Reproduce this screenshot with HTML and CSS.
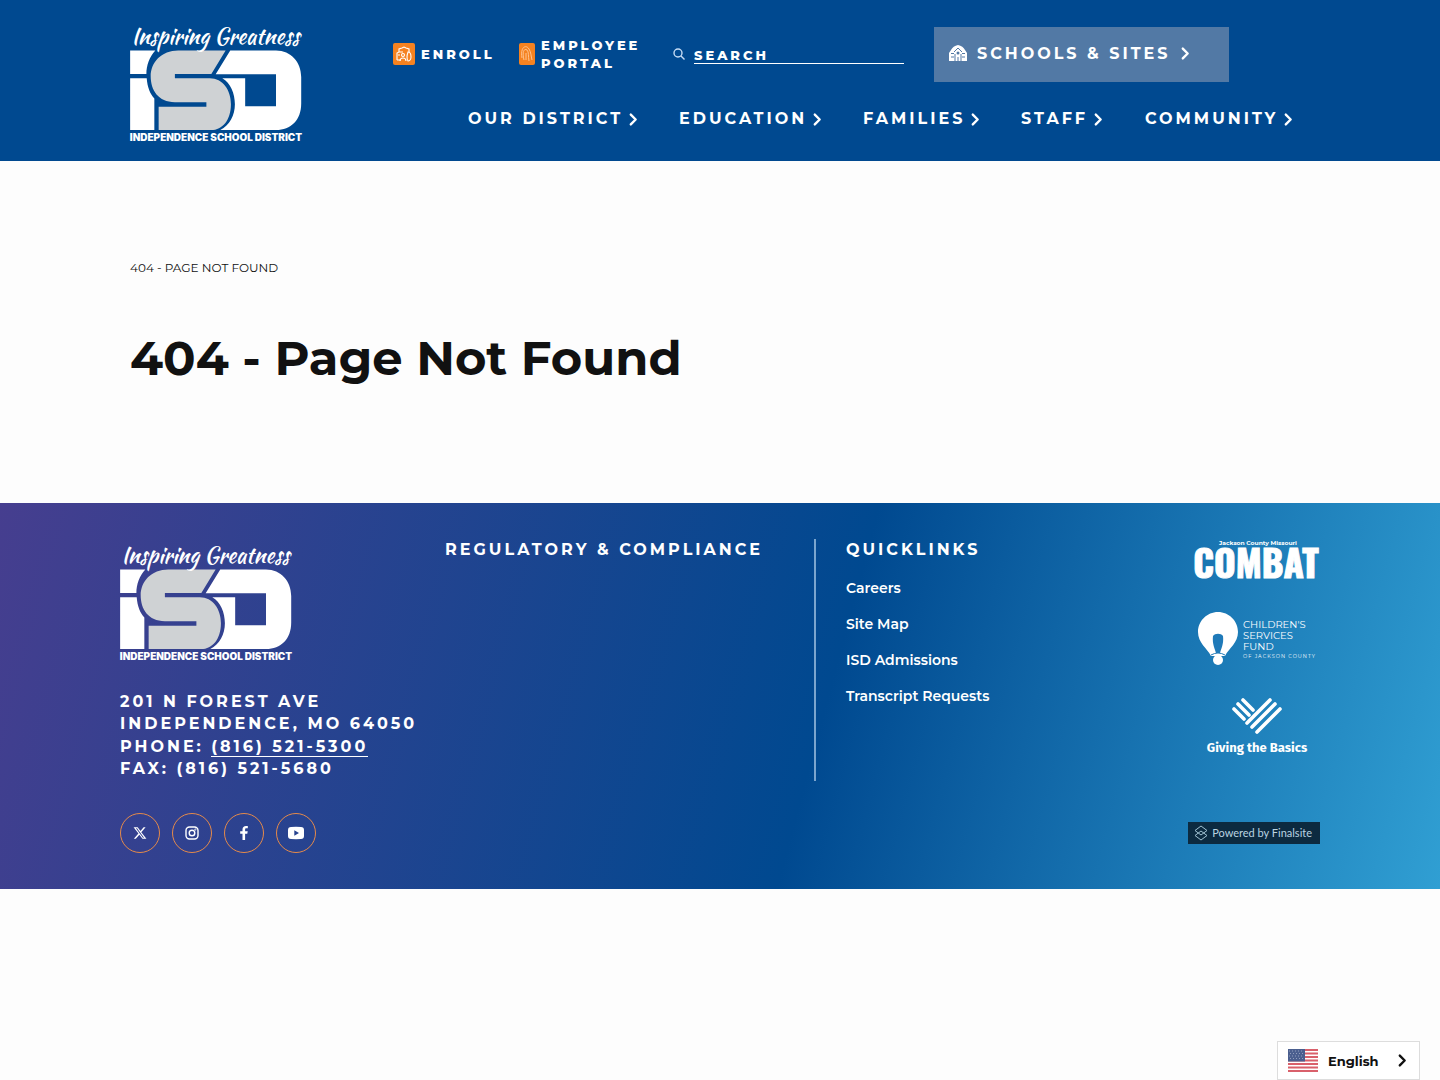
FILE: index.html
```html
<!DOCTYPE html>
<html lang="en">
<head>
  <meta charset="utf-8">
  <meta name="viewport" content="width=device-width, initial-scale=1.0">
  <title>404 - Page Not Found</title>
  <link rel="stylesheet" href="styles.css">
</head>
<body>

  <!-- Shared shapes -->
  <svg class="sprite" aria-hidden="true">
    <symbol id="logo" viewBox="30 28 518 368">
      <path fill="#fff" d="M30 120H106C88 140 79 165 79 191H30ZM30 204H80C82 232 91 252 103 265V360H30Z"/>
      <path fill="#cfd2d4" d="M175 120H318L275 191H165V204H270C310 204 334 240 334 282C334 330 308 360 275 360H116V290H260V276H165C115 276 92 240 92 198C92 155 125 120 175 120Z"/>
      <path fill="#fff" d="M332 120H470C515 120 546 155 546 200V280C546 330 515 360 470 360H302C330 345 346 315 346 282C346 250 333 218 308 204H377V288H470V192H288Z"/>
      <text class="logo-script" x="34" y="100">Inspiring Greatness</text>
      <text class="logo-name" x="29" y="393">INDEPENDENCE SCHOOL DISTRICT</text>
    </symbol>
    <symbol id="chevron" viewBox="0 0 8 12">
      <path d="M1.5 1.5L6 6L1.5 10.5" fill="none" stroke="currentColor" stroke-width="2.2" stroke-linecap="round" stroke-linejoin="round"/>
    </symbol>
  </svg>

  <header class="header">
    <a class="logo" href="#" aria-label="Independence School District"><svg><use href="#logo"/></svg></a>

    <div class="header-right">
      <div class="header-top">
        <a class="top-link enroll" href="#">
          <svg width="22" height="22" viewBox="0 0 22 22" fill="none" stroke="#fff" stroke-width="1.1">
            <rect width="22" height="22" rx="2" fill="#f58220" stroke="none"/>
            <path d="M4 17V10L6 9V6L9 5L11 4L13 5L16 6V9M6 9H10M4 17H8M5 12H7"/>
            <circle cx="10" cy="12" r="1.5"/><path d="M7 18C7 14 13 14 13 18M15 9C18 9 18 12 18 14C18 17 16 18 15 18C13 15 14 12 15 9Z"/>
          </svg>
          Enroll
        </a>
        <a class="top-link portal" href="#">
          <svg width="16" height="22" viewBox="0 0 16 22" fill="none" stroke="#ffc38f" stroke-width="1">
            <rect width="16" height="22" rx="2" fill="#f58220" stroke="none"/>
            <path d="M3 15C1 4 7 1 10 6C12 9 12 13 13 17M5 17C3 9 5 5 8 7C10 9 9 13 10 18M7 10V17"/>
          </svg>
          <span>Employee<br>Portal</span>
        </a>
        <form class="search">
          <svg width="12" height="12" viewBox="0 0 12 12" fill="none" stroke="#c5dcf5" stroke-width="1.4">
            <circle cx="5" cy="5" r="4"/><path d="M8 8L11.5 11.5"/>
          </svg>
          <input type="search" aria-label="Search" placeholder="SEARCH">
        </form>
        <button class="schools" type="button">
          <svg width="18" height="16" viewBox="0 0 18 16">
            <path fill="#fff" d="M2 5Q4 1 9 0Q14 1 16 5L18 8V16H0V8Z"/>
            <path fill="none" stroke="#5279a5" d="M5 7L9 3L13 7M6 16V9M12 16V9M2 8.5H5M2 12H5M13 8.5H16M13 12H16M9 16V12"/>
            <circle cx="9" cy="8" r="1.5" fill="#5279a5"/>
          </svg>
          Schools &amp; Sites
          <svg class="chevron"><use href="#chevron"/></svg>
        </button>
      </div>

      <nav class="nav" aria-label="Main">
        <a href="#">Our District <svg class="chevron"><use href="#chevron"/></svg></a>
        <a href="#">Education <svg class="chevron"><use href="#chevron"/></svg></a>
        <a href="#">Families <svg class="chevron"><use href="#chevron"/></svg></a>
        <a href="#">Staff <svg class="chevron"><use href="#chevron"/></svg></a>
        <a href="#">Community <svg class="chevron"><use href="#chevron"/></svg></a>
      </nav>
    </div>
  </header>

  <main class="main">
    <p class="breadcrumb">404 - Page Not Found</p>
    <h1>404 - Page Not Found</h1>
  </main>

  <footer class="footer">
    <div class="footer-columns">
      <div class="contact">
        <a class="logo" href="#" aria-label="Independence School District"><svg><use href="#logo"/></svg></a>
        <address>
          201 N Forest Ave<br>
          Independence, MO 64050<br>
          Phone: <a href="tel:8165215300">(816) 521-5300</a><br>
          Fax: (816) 521-5680
        </address>
      </div>

      <section>
        <h2>Regulatory &amp; Compliance</h2>
      </section>

      <section class="quicklinks">
        <h2>Quicklinks</h2>
        <ul>
          <li><a href="#">Careers</a></li>
          <li><a href="#">Site Map</a></li>
          <li><a href="#">ISD Admissions</a></li>
          <li><a href="#">Transcript Requests</a></li>
        </ul>
      </section>

      <div class="partners">
        <a href="#" aria-label="Jackson County Missouri Combat">
          <svg width="128" height="41" viewBox="0 0 128 41" fill="#fff">
            <text class="combat-small" x="66" y="6" text-anchor="middle">Jackson County Missouri</text>
            <text class="combat" x="64" y="39" text-anchor="middle">COMBAT</text>
          </svg>
        </a>
        <a href="#" aria-label="Children's Services Fund of Jackson County">
          <svg width="118" height="54" viewBox="0 0 118 54" fill="#fff">
            <path d="M21 0C32 0 41 9 41 20C41 31 32 36 28 44H14C10 36 1 31 1 20C1 9 10 0 21 0Z"/>
            <path d="M16 24C18 21 24 21 26 24C27 32 24 37 23 41H19C18 37 15 32 16 24Z" fill="#1f7ab9"/>
            <circle cx="21" cy="48" r="5"/>
            <path d="M14 43Q21 39 28 43" fill="none" stroke="#1f7ab9"/>
            <text class="fund" x="46" y="16">CHILDREN'S</text>
            <text class="fund" x="46" y="27">SERVICES</text>
            <text class="fund" x="46" y="38">FUND</text>
            <text class="fund-small" x="46" y="46">OF JACKSON COUNTY</text>
          </svg>
        </a>
        <a href="#" aria-label="Giving the Basics">
          <svg width="104" height="60" viewBox="0 0 104 60" fill="#fff">
            <path fill="none" stroke="#fff" stroke-width="3.6" stroke-linecap="round" d="M39 2L49 12M34 6L45 17M30 11L40 21M66 2L43 25M71 6L48 29M76 11L53 34"/>
            <text class="basics" x="53" y="54" text-anchor="middle">Giving the Basics</text>
          </svg>
        </a>
      </div>
    </div>

    <div class="footer-bottom">
      <div class="social">
        <a href="#" aria-label="X">
          <svg width="14" height="14" viewBox="0 0 24 24" fill="#fff"><path d="M18.2 2h3.4l-7.4 8.5L23 22h-6.8l-5.3-7-6.1 7H1.4l7.9-9.1L1 2h7l4.8 6.4zM17 20h1.9L6.9 3.9h-2z"/></svg>
        </a>
        <a href="#" aria-label="Instagram">
          <svg width="14" height="14" viewBox="0 0 14 14" fill="none" stroke="#fff" stroke-width="1.4"><rect x="1" y="1" width="12" height="12" rx="3.5"/><circle cx="7" cy="7" r="2.8"/><circle cx="10.4" cy="3.6" r=".3"/></svg>
        </a>
        <a href="#" aria-label="Facebook">
          <svg width="14" height="14" viewBox="0 0 14 14" fill="#fff"><path d="M5.5 14V7.8H3.2V5.3H5.5V3.6C5.5 1.2 6.8 0 9 0L10.8.1V2.3H9.4C8.4 2.3 8.1 2.8 8.1 3.6V5.3H10.7L10.3 7.8H8.1V14Z"/></svg>
        </a>
        <a href="#" aria-label="YouTube">
          <svg width="16" height="12" viewBox="0 0 16 12" fill="#fff"><path fill-rule="evenodd" d="M3 0Q8-.4 13 0Q16 0 16 3V9Q16 12 13 12Q8 12.3 3 12Q0 12 0 9V3Q0 0 3 0ZM6.3 3.3V8.7L11 6Z"/></svg>
        </a>
      </div>
      <a class="finalsite" href="#">
        <svg width="14" height="16" viewBox="0 0 14 16" fill="none" stroke="#9fc0d0"><path d="M7 1L13 5.5L7 10L1 5.5ZM7 6L13 10.5L7 15L1 10.5Z"/></svg>
        Powered by Finalsite
      </a>
    </div>
  </footer>

  <button class="language" type="button">
    <svg width="30" height="23" viewBox="0 0 30 23">
      <path fill="#fff" d="M0 0H30V23H0Z"/>
      <path stroke="#d9606b" stroke-width="1.8" d="M0 1H30M0 4.5H30M0 8H30M0 11.5H30M0 15H30M0 18.5H30M0 22H30"/>
      <path fill="#4b5f8f" d="M0 0H17V12.5H0Z"/>
      <path stroke="#a3afc9" stroke-width=".8" stroke-dasharray="1 2" d="M1 2H16M2 4.5H16M1 7H16M2 9.5H16"/>
    </svg>
    <span>English</span>
    <svg class="chevron"><use href="#chevron"/></svg>
  </button>

</body>
</html>
```

FILE: styles.css
```css
* {
  box-sizing: border-box;
}
body {
  margin: 0;
  font-family: Montserrat, Inter, sans-serif;
  color: #111;
  background-color: #fdfdfd;
}
a {
  color: inherit;
  text-decoration: none;
}
button {
  font-family: inherit;
  border: none;
  cursor: pointer;
}
svg {
  display: block;
  flex: none;
}
svg, symbol {
  overflow: visible;
}
.sprite {
  position: absolute;
  width: 0;
  height: 0;
}
.chevron {
  width: 9px;
  height: 13px;
}

/* Logo */
.logo {
  display: block;
}
.logo svg {
  width: 172px;
  height: 122px;
}
.logo-script {
  font: 400 66px "Kaushan Script", Lato, sans-serif;
  fill: #fff;
}
.logo-name {
  font: 900 30px Inter, sans-serif;
  fill: #fff;
}

/* Header */
.header {
  display: flex;
  justify-content: space-between;
  padding: 20px 130px 19px;
  background-color: #004990;
  color: #fff;
}
.header-right {
  width: 917px;
  padding-top: 7px;
}
.header-top {
  display: flex;
  align-items: center;
  height: 54px;
}
.top-link {
  display: flex;
  align-items: center;
  gap: 6px;
  font-size: 13px;
  font-weight: 800;
  line-height: 18px;
  letter-spacing: 3px;
  text-transform: uppercase;
}
.enroll {
  width: 126px;
}
.portal {
  width: 154px;
}
.search {
  display: flex;
  align-items: center;
  gap: 9px;
  width: 231px;
  margin-right: 30px;
}
.search input {
  flex: 1;
  min-width: 0;
  height: 20px;
  padding: 2px 0 0;
  border: none;
  border-bottom: 1px solid #fff;
  border-radius: 0;
  background: none;
  color: #fff;
  font: 800 13px Montserrat, Inter, sans-serif;
  letter-spacing: 3px;
  outline: none;
}
.search input::placeholder {
  color: #fff;
  opacity: 1;
}
.schools {
  display: flex;
  align-items: center;
  gap: 10px;
  width: 295px;
  height: 55px;
  padding: 0 15px 2px;
  background-color: #5279a5;
  color: #fff;
  font-size: 16px;
  font-weight: 700;
  letter-spacing: 3px;
  text-transform: uppercase;
}
.nav {
  display: grid;
  grid-template-columns: 211fr 184fr 158fr 124fr 165fr;
  margin: 26px 0 0 75px;
}
.nav a {
  display: flex;
  align-items: center;
  gap: 6px;
  font-size: 16px;
  font-weight: 700;
  line-height: 24px;
  letter-spacing: 3px;
  text-transform: uppercase;
  white-space: nowrap;
}

/* Content */
.main {
  padding: 98px 130px 113px;
}
.breadcrumb {
  margin: 0 0 49px;
  font-size: 12px;
  line-height: 18px;
  text-transform: uppercase;
}
h1 {
  margin: 0;
  font-size: 48px;
  font-weight: 700;
  line-height: 64px;
}

/* Footer */
.footer {
  padding: 36px 120px;
  background: linear-gradient(105deg, #463e8f 0%, #004990 57%, #309fd3 100%);
  color: #fff;
}
.footer-columns {
  display: grid;
  grid-template-columns: 325fr 369fr 378fr 128fr;
}
address {
  margin-top: 30px;
  font-size: 16px;
  font-style: normal;
  font-weight: 700;
  line-height: 1.4;
  letter-spacing: 3px;
  text-transform: uppercase;
  white-space: nowrap;
}
address a {
  border-bottom: 1px solid #fff;
}
h2 {
  margin: 0;
  font-size: 16px;
  font-weight: 700;
  line-height: 22px;
  letter-spacing: 3px;
  text-transform: uppercase;
}
.quicklinks {
  padding-left: 30px;
  border-left: 2px solid #7ba5ce;
}
.quicklinks ul {
  margin: 9px 0 0;
  padding: 0;
  list-style: none;
}
.quicklinks li {
  font-size: 14px;
  font-weight: 600;
  line-height: 36px;
}
.partners {
  display: flex;
  flex-direction: column;
  align-items: center;
  gap: 32px;
}
.combat-small {
  font: 700 6px Montserrat, sans-serif;
}
.combat {
  font: 700 37px Oswald, sans-serif;
  stroke: #fff;
  stroke-width: 1;
}
.fund {
  font: 400 10px Montserrat, sans-serif;
}
.fund-small {
  font: 400 5px Montserrat, sans-serif;
  letter-spacing: 1px;
}
.basics {
  font: 700 13px "Fira Sans", Lato, sans-serif;
}
.footer-bottom {
  display: flex;
  align-items: center;
  justify-content: space-between;
  margin-top: 32px;
}
.social {
  display: flex;
  gap: 12px;
}
.social a {
  display: flex;
  align-items: center;
  justify-content: center;
  width: 40px;
  height: 40px;
  border: 1px solid #e58a4a;
  border-radius: 50%;
}
.finalsite {
  display: flex;
  align-items: center;
  gap: 4px;
  height: 22px;
  padding: 0 8px 0 6px;
  background-color: #0c2a40;
  color: #b9d3e0;
  font: 400 11px Lato, sans-serif;
}

/* Language picker */
.language {
  position: fixed;
  right: 20px;
  bottom: 0;
  display: flex;
  align-items: center;
  gap: 10px;
  width: 143px;
  height: 39px;
  padding: 0 12px 0 10px;
  border: 1px solid #ddd;
  background-color: #fff;
  color: #111;
  font-size: 13px;
  font-weight: 700;
}
.language .chevron {
  margin-left: auto;
}
```
